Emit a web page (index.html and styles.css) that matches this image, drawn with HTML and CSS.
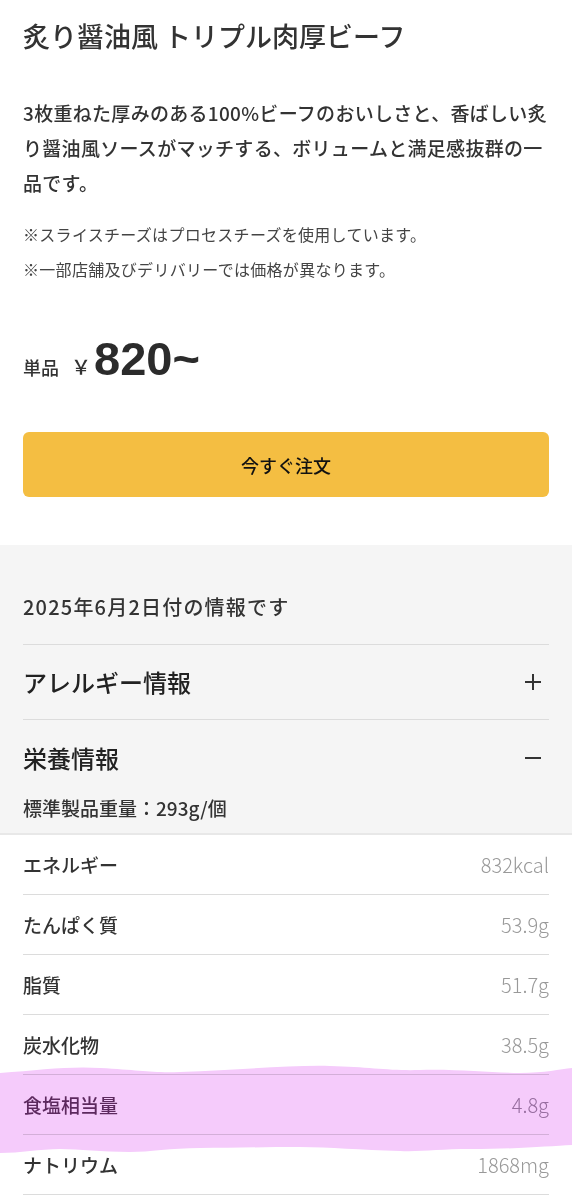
FILE: index.html
```html
<!DOCTYPE html>
<html lang="ja">
<head>
  <meta charset="UTF-8">
  <title>炙り醤油風 トリプル肉厚ビーフ</title>
  <link rel="stylesheet" href="styles.css">
</head>
<body>

  <main class="page">
    <section class="product">
      <h1 class="product-name">炙り醤油風 トリプル肉厚ビーフ</h1>
      <p class="product-desc">3枚重ねた厚みのある100%ビーフのおいしさと、香ばしい炙り醤油風ソースがマッチする、ボリュームと満足感抜群の一品です。</p>
      <p class="note">※スライスチーズはプロセスチーズを使用しています。</p>
      <p class="note">※一部店舗及びデリバリーでは価格が異なります。</p>

      <div class="price">
        <span class="price-label">単品</span>
        <span class="price-yen">￥</span>
        <span class="price-value">820~</span>
      </div>

      <button class="order-btn">今すぐ注文</button>
    </section>

    <section class="info">
      <p class="info-date">2025年6月2日付の情報です</p>

      <div class="accordion">
        <div class="accordion-head">
          <h2>アレルギー情報</h2>
          <svg class="acc-icon" width="18" height="18" viewBox="0 0 18 18"><path d="M9 1v16M1 9h16" stroke="#333" stroke-width="2"/></svg>
        </div>
      </div>

      <div class="accordion open">
        <div class="accordion-head">
          <h2>栄養情報</h2>
          <svg class="acc-icon" width="18" height="18" viewBox="0 0 18 18"><path d="M1 9h16" stroke="#333" stroke-width="2"/></svg>
        </div>
        <p class="weight">標準製品重量：293g/個</p>
      </div>
    </section>

    <ul class="nutrition">
      <li><span>エネルギー</span><span class="val">832kcal</span></li>
      <li><span>たんぱく質</span><span class="val">53.9g</span></li>
      <li><span>脂質</span><span class="val">51.7g</span></li>
      <li><span>炭水化物</span><span class="val">38.5g</span></li>
      <li class="hl"><span>食塩相当量</span><span class="val">4.8g</span></li>
      <li><span>ナトリウム</span><span class="val">1868mg</span></li>
    </ul>

    <!-- 蛍光ペンのマーク -->
    <svg class="marker" width="572" height="100" viewBox="0 0 572 100" preserveAspectRatio="none">
      <path d="M0 13 C40 10 70 6 100 8 C140 10 150 13 180 12 C240 10 290 5 330 6 C370 7 390 11 420 10 C460 9 490 13 520 13 C545 13 560 9 572 8 L572 85 C550 86 520 89 470 89 C440 89 420 92 400 91 C360 90 330 87 300 87 C260 87 230 88 200 88 C170 88 150 92 130 92 C100 92 80 89 60 89 C40 89 20 93 0 93 Z" fill="#f5cbfb"/>
    </svg>
  </main>

</body>
</html>
```

FILE: styles.css
```css
* {
  box-sizing: border-box;
}

body {
  margin: 0;
  background: #fff;
  color: #333;
  font-family: "Noto Sans CJK JP", "Noto Sans", sans-serif;
}

.page {
  position: relative;
  width: 572px;
}

.product {
  padding: 17px 23px 48px;
}

.product-name {
  margin: 0;
  font-size: 27px;
  line-height: 38px;
  font-weight: 500;
  color: #333;
}

.product-desc {
  margin: 40px 0 17px;
  font-size: 19px;
  line-height: 35px;
  font-weight: 500;
  letter-spacing: 0.3px;
  color: #333;
}

.note {
  margin: 0;
  font-size: 16px;
  line-height: 35px;
  letter-spacing: 0.3px;
  color: #444;
}

.price {
  display: flex;
  align-items: baseline;
  margin-top: 47px;
}

.price-label {
  font-size: 18px;
  font-weight: 500;
}

.price-yen {
  margin-left: 12px;
  font-size: 20px;
  font-weight: 500;
}

.price-value {
  margin-left: 3px;
  font-family: "Liberation Sans", Arial, sans-serif;
  font-size: 47px;
  font-weight: bold;
  line-height: 50px;
  color: #2b2b2b;
}

.order-btn {
  display: block;
  width: 100%;
  height: 65px;
  margin-top: 48px;
  border: none;
  border-radius: 6px;
  background: #f4be42;
  color: #111;
  font-family: inherit;
  font-size: 18px;
  font-weight: 500;
}

.info {
  background: #f5f5f5;
  padding: 49px 23px 12px;
  border-bottom: 2px solid #e8e8e8;
}

.info-date {
  margin: 0;
  padding-bottom: 24px;
  font-size: 20px;
  line-height: 26px;
  font-weight: 500;
  letter-spacing: 1.2px;
  border-bottom: 1px solid #dcdcdc;
}

.accordion {
  border-bottom: 1px solid #dcdcdc;
}

.accordion.open {
  border-bottom: none;
}

.accordion-head {
  display: flex;
  justify-content: space-between;
  align-items: center;
  height: 74px;
  padding-right: 7px;
}

.accordion.open .accordion-head {
  height: 76px;
}

.accordion-head h2 {
  margin: 0;
  font-size: 24px;
  line-height: 34px;
  font-weight: 500;
  color: #222;
}

.weight {
  margin: -1px 0 0;
  font-size: 19px;
  line-height: 26px;
  font-weight: 500;
}

.nutrition {
  list-style: none;
  margin: 0 23px;
  padding: 0;
}

.nutrition li {
  display: flex;
  justify-content: space-between;
  align-items: center;
  height: 60px;
  border-bottom: 1px solid #dcdcdc;
  font-size: 19px;
  font-weight: 500;
  padding-bottom: 1px;
}

.nutrition .val {
  color: #999;
  font-size: 20px;
  font-weight: 300;
}

.nutrition li.hl {
  color: #60335f;
}

.nutrition li.hl .val {
  color: #9e8aa3;
}

.marker {
  position: absolute;
  left: 0;
  top: 1060px;
  mix-blend-mode: multiply;
  pointer-events: none;
}
```
